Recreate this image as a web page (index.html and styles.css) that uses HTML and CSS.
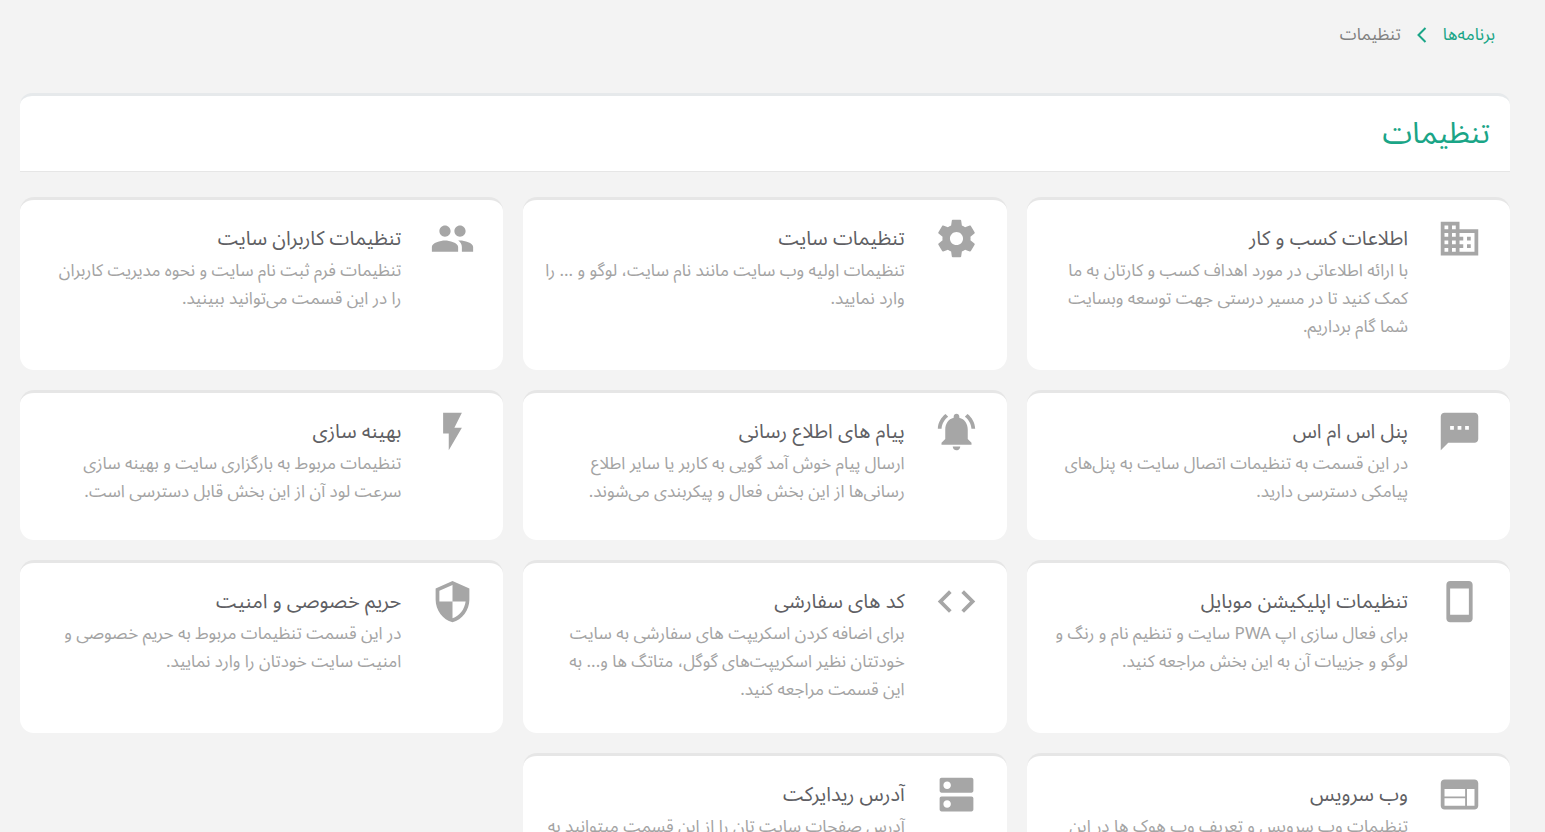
FILE: index.html
```html
<!DOCTYPE html>
<html lang="fa" dir="rtl">
<head>
<meta charset="utf-8">
<meta name="viewport" content="width=device-width, initial-scale=1">
<title>تنظیمات</title>
<link rel="stylesheet" href="styles.css">
</head>
<body>
<nav class="breadcrumb" aria-label="مسیر">
  <a class="breadcrumb-link" href="#">برنامه‌ها</a>
  <svg class="breadcrumb-arrow" viewBox="0 0 10 16" aria-hidden="true"><path d="M8.500 1 1.500 8l7 7" fill="none" stroke="currentColor" stroke-width="2"/></svg>
  <span>تنظیمات</span>
</nav>
<main class="page">
  <header class="page-header"><h1 class="page-title">تنظیمات</h1></header>
  <div class="cards">
    <a class="card" href="#">
      <svg class="card-icon" viewBox="0 0 24 24" aria-hidden="true"><path d="M12 7V3H2v18h20V7H12zM6 19H4v-2h2v2zm0-4H4v-2h2v2zm0-4H4V9h2v2zm0-4H4V5h2v2zm4 12H8v-2h2v2zm0-4H8v-2h2v2zm0-4H8V9h2v2zm0-4H8V5h2v2zm10 12h-8v-2h2v-2h-2v-2h2v-2h-2V9h8v10zm-2-8h-2v2h2v-2zm0 4h-2v2h2v-2z"/></svg>
      <div class="card-body">
        <h2 class="card-title">اطلاعات کسب و کار</h2>
        <p class="card-text">با ارائه اطلاعاتی در مورد اهداف کسب و کارتان به ما<br>کمک کنید تا در مسیر درستی جهت توسعه وبسایت<br>شما گام برداریم.</p>
      </div>
    </a>
    <a class="card" href="#">
      <svg class="card-icon" viewBox="0 0 24 24" aria-hidden="true"><path d="M19.430 12.980c.04-.32.07-.64.07-.98s-.03-.66-.07-.98l2.110-1.650c.19-.15.24-.42.12-.64l-2-3.460c-.12-.22-.39-.3-.61-.22l-2.490 1c-.52-.4-1.080-.73-1.690-.98l-.38-2.650C14.460 2.180 14.250 2 14 2h-4c-.25 0-.46.18-.49.42l-.38 2.650c-.61.25-1.170.59-1.690.98l-2.490-1c-.23-.09-.49 0-.61.22l-2 3.460c-.13.22-.07.49.12.64l2.110 1.650c-.04.32-.07.65-.07.98s.03.66.07.98l-2.110 1.650c-.19.15-.24.42-.12.64l2 3.460c.12.22.39.3.61.22l2.490-1c.52.4 1.080.73 1.690.98l.38 2.650c.03.24.24.42.49.42h4c.25 0 .46-.18.49-.42l.38-2.650c.61-.25 1.170-.59 1.690-.98l2.490 1c.23.09.49 0 .61-.22l2-3.460c.12-.22.07-.49-.12-.64l-2.110-1.650zM12 15.500c-1.930 0-3.500-1.570-3.500-3.500s1.570-3.500 3.500-3.500 3.500 1.570 3.500 3.500-1.570 3.500-3.500 3.500z"/></svg>
      <div class="card-body">
        <h2 class="card-title">تنظیمات سایت</h2>
        <p class="card-text">تنظیمات اولیه وب سایت مانند نام سایت، لوگو و ... را<br>وارد نمایید.</p>
      </div>
    </a>
    <a class="card" href="#">
      <svg class="card-icon" viewBox="0 0 24 24" aria-hidden="true"><path d="M16 11c1.660 0 2.990-1.340 2.990-3S17.660 5 16 5c-1.660 0-3 1.340-3 3s1.340 3 3 3zm-8 0c1.660 0 2.990-1.340 2.990-3S9.660 5 8 5C6.340 5 5 6.340 5 8s1.340 3 3 3zm0 2c-2.330 0-7 1.170-7 3.500V19h14v-2.500c0-2.330-4.670-3.500-7-3.500zm8 0c-.29 0-.62.02-.97.05 1.160.84 1.970 1.970 1.970 3.450V19h6v-2.500c0-2.330-4.670-3.500-7-3.500z"/></svg>
      <div class="card-body">
        <h2 class="card-title">تنظیمات کاربران سایت</h2>
        <p class="card-text">تنظیمات فرم ثبت نام سایت و نحوه مدیریت کاربران<br>را در این قسمت می‌توانید ببینید.</p>
      </div>
    </a>
    <a class="card" href="#">
      <svg class="card-icon" viewBox="0 0 24 24" aria-hidden="true"><path d="M20 2H4c-1.100 0-1.990.9-1.990 2L2 22l4-4h14c1.100 0 2-.9 2-2V4c0-1.100-.9-2-2-2zM9 11H7V9h2v2zm4 0h-2V9h2v2zm4 0h-2V9h2v2z"/></svg>
      <div class="card-body">
        <h2 class="card-title">پنل اس ام اس</h2>
        <p class="card-text">در این قسمت به تنظیمات اتصال سایت به پنل‌های<br>پیامکی دسترسی دارید.</p>
      </div>
    </a>
    <a class="card" href="#">
      <svg class="card-icon" viewBox="0 0 24 24" aria-hidden="true"><path d="M7.580 4.080 6.150 2.650C3.750 4.480 2.170 7.300 2.030 10.500h2c.15-2.650 1.510-4.970 3.550-6.420zm12.390 6.420h2c-.15-3.200-1.730-6.020-4.120-7.850l-1.420 1.430c2.020 1.450 3.390 3.770 3.540 6.420zM18 11c0-3.070-1.640-5.640-4.500-6.320V4c0-.83-.67-1.500-1.500-1.500s-1.500.67-1.500 1.500v.68C7.630 5.360 6 7.920 6 11v5l-2 2v1h16v-1l-2-2v-5zm-6 11c.14 0 .27-.01.4-.04.65-.14 1.180-.58 1.440-1.180.1-.24.15-.5.15-.78h-4c.01 1.100.9 2 2.010 2z"/></svg>
      <div class="card-body">
        <h2 class="card-title">پیام های اطلاع رسانی</h2>
        <p class="card-text">ارسال پیام خوش آمد گویی به کاربر یا سایر اطلاع<br>رسانی‌ها از این بخش فعال و پیکربندی می‌شوند.</p>
      </div>
    </a>
    <a class="card" href="#">
      <svg class="card-icon" viewBox="0 0 24 24" aria-hidden="true"><path d="M7 2v11h3v9l7-12h-4l4-8z"/></svg>
      <div class="card-body">
        <h2 class="card-title">بهینه سازی</h2>
        <p class="card-text">تنظیمات مربوط به بارگزاری سایت و بهینه سازی<br>سرعت لود آن از این بخش قابل دسترسی است.</p>
      </div>
    </a>
    <a class="card" href="#">
      <svg class="card-icon" viewBox="0 0 24 24" aria-hidden="true"><path d="M17 1.010 7 1c-1.100 0-2 .9-2 2v18c0 1.100.9 2 2 2h10c1.100 0 2-.9 2-2V3c0-1.100-.9-1.990-2-1.990zM17 19H7V5h10v14z"/></svg>
      <div class="card-body">
        <h2 class="card-title">تنظیمات اپلیکیشن موبایل</h2>
        <p class="card-text">برای فعال سازی اپ PWA سایت و تنظیم نام و رنگ و<br>لوگو و جزییات آن به این بخش مراجعه کنید.</p>
      </div>
    </a>
    <a class="card" href="#">
      <svg class="card-icon" viewBox="0 0 24 24" aria-hidden="true"><path d="M9.400 16.600 4.800 12l4.600-4.600L8 6l-6 6 6 6 1.400-1.400zm5.200 0 4.600-4.600-4.600-4.600L16 6l6 6-6 6-1.400-1.400z"/></svg>
      <div class="card-body">
        <h2 class="card-title">کد های سفارشی</h2>
        <p class="card-text">برای اضافه کردن اسکریپت های سفارشی به سایت<br>خودتتان نظیر اسکریپت‌های گوگل، متاتگ ها و... به<br>این قسمت مراجعه کنید.</p>
      </div>
    </a>
    <a class="card" href="#">
      <svg class="card-icon" viewBox="0 0 24 24" aria-hidden="true"><path d="M12 1 3 5v6c0 5.550 3.840 10.740 9 12 5.160-1.260 9-6.450 9-12V5l-9-4zm0 10.990h7c-.53 4.120-3.280 7.790-7 8.940V12H5V6.300l7-3.110v8.800z"/></svg>
      <div class="card-body">
        <h2 class="card-title">حریم خصوصی و امنیت</h2>
        <p class="card-text">در این قسمت تنظیمات مربوط به حریم خصوصی و<br>امنیت سایت خودتان را وارد نمایید.</p>
      </div>
    </a>
    <a class="card" href="#">
      <svg class="card-icon" viewBox="0 0 24 24" aria-hidden="true"><path d="M20 4H4c-1.100 0-1.990.9-1.990 2L2 18c0 1.100.9 2 2 2h16c1.100 0 2-.9 2-2V6c0-1.100-.9-2-2-2zm-5 14H4v-4h11v4zm0-5H4V9h11v4zm5 5h-4V9h4v9z"/></svg>
      <div class="card-body">
        <h2 class="card-title">وب سرویس</h2>
        <p class="card-text">تنظیمات وب سرویس و تعریف وب هوک ها در این</p>
      </div>
    </a>
    <a class="card" href="#">
      <svg class="card-icon" viewBox="0 0 24 24" aria-hidden="true"><path d="M20 13H4c-.55 0-1 .45-1 1v6c0 .55.45 1 1 1h16c.55 0 1-.45 1-1v-6c0-.55-.45-1-1-1zM7 19c-1.100 0-2-.9-2-2s.9-2 2-2 2 .9 2 2-.9 2-2 2zM20 3H4c-.55 0-1 .45-1 1v6c0 .55.45 1 1 1h16c.55 0 1-.45 1-1V4c0-.55-.45-1-1-1zM7 9c-1.100 0-2-.9-2-2s.9-2 2-2 2 .9 2 2-.9 2-2 2z"/></svg>
      <div class="card-body">
        <h2 class="card-title">آدرس ریدایرکت</h2>
        <p class="card-text">آدرس صفحات سایت تان را از این قسمت میتوانید به</p>
      </div>
    </a>
  </div>
</main>
</body>
</html>
```
FILE: styles.css
```css
* { box-sizing: border-box; }

body {
  margin: 0;
  padding: 20px 35px 20px 20px;
  background: #f3f3f3;
  color: #808080;
  font-family: "Noto Sans Arabic", "Noto Sans", "DejaVu Sans", sans-serif;
  font-size: 17px;
  line-height: 28px;
}

.breadcrumb {
  display: flex;
  align-items: center;
  gap: 16px;
  height: 30px;
  padding-right: 15px;
}

.breadcrumb-link,
.breadcrumb-arrow { color: #1aa587; text-decoration: none; }

.breadcrumb-arrow { width: 10px; height: 16px; }

.page { margin-top: 43px; }

.page-header {
  display: flex;
  align-items: center;
  height: 79px;
  margin-bottom: 25px;
  padding: 0 20px;
  border-top: 3px solid #e6e9eb;
  border-bottom: 1px solid #e6e6e6;
  border-radius: 12px 12px 0 0;
  background: #fff;
}

.page-title {
  margin: 0;
  color: #1aa587;
  font-size: 30px;
  font-weight: 400;
  line-height: 40px;
}

.cards {
  display: grid;
  grid-template-columns: repeat(3, 1fr);
  gap: 20px;
}

.card {
  display: flex;
  gap: 29px;
  min-height: 150px;
  padding: 16px 28px 29px 12px;
  border-top: 3px solid #e6e6e6;
  border-radius: 14px;
  background: #fff;
  color: #a3a3a3;
  text-decoration: none;
}

.card-icon {
  flex: none;
  width: 45px;
  height: 45px;
  fill: #a6a6a6;
}

.card-body { flex: 1; min-width: 0; padding-top: 9px; }

.card-title {
  margin: 0 0 4px;
  color: #5f5f64;
  font-size: 20px;
  font-weight: 400;
  line-height: 28px;
}

.card-text { margin: 0; font-size: 17px; }
```
